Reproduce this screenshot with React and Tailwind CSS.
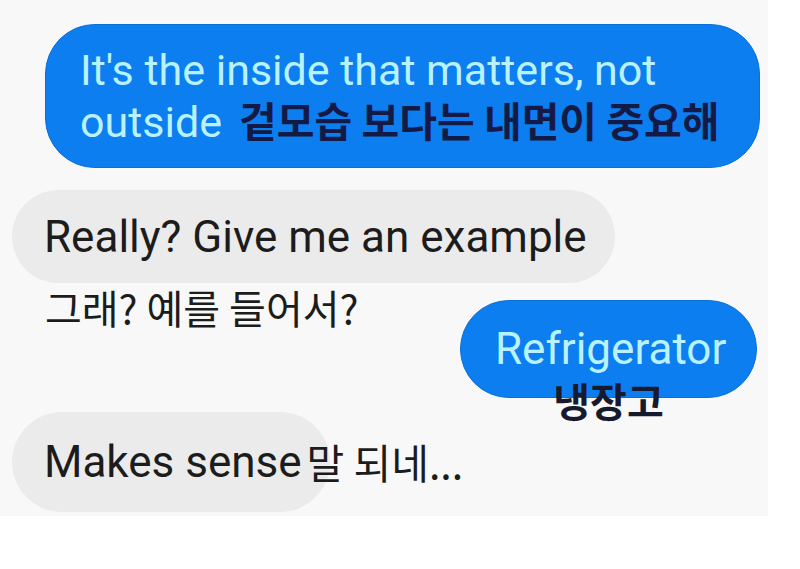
const latin = { fontFamily: "Roboto, 'Noto Sans CJK KR', sans-serif" };
const hangul = { fontFamily: "'Noto Sans CJK KR', sans-serif" };

export default function App() {
  return (
    <div className="w-[800px] h-[569px] bg-white overflow-hidden">
      <div className="w-[768px] h-[516px] bg-[#f8f8f8] flex flex-col" style={latin}>
        {/* outgoing */}
        <div className="ml-[45px] mt-[24px] w-[715px] h-[144px] rounded-[50px] bg-[#0d7ef0] border border-[#0a6fd6] pl-[34px] pt-[21px] text-[43px] leading-[49px] text-[#b9f2ff] whitespace-nowrap">
          <div>It's the inside that matters, not</div>
          <div className="flex items-baseline">
            <span>outside</span>
            <span className="ml-[17px] text-[41px] font-semibold text-[#141a46]" style={hangul}>
              겉모습 보다는 내면이 중요해
            </span>
          </div>
        </div>

        {/* incoming */}
        <div className="ml-[12px] mt-[22px] w-[603px] h-[93px] rounded-full bg-[#ebebeb] flex items-center pl-[32px] text-[44px] text-[#1c1c1c]">
          Really? Give me an example
        </div>

        <div className="flex justify-between">
          <div className="ml-[45px] text-[40px] text-[#1c1c1c] leading-[48px]" style={hangul}>
            그래? 예를 들어서?
          </div>
          <div className="flex flex-col items-center mr-[11px] mt-[17px]">
            <div className="w-[297px] h-[98px] rounded-full bg-[#0d7ef0] border border-[#0a6fd6] flex items-center pl-[34px] text-[44px] leading-[40px] text-[#b9f2ff]">
              Refrigerator
            </div>
            <div className="-mt-[16px] text-[40px] font-semibold text-[#161a2e] leading-[36px]" style={hangul}>
              냉장고
            </div>
          </div>
        </div>

        <div className="ml-[12px] mt-[-6px] w-[318px] h-[100px] rounded-full bg-[#ebebeb] flex items-center pl-[32px] text-[44px] text-[#1c1c1c] whitespace-nowrap">
          <span>Makes sense</span>
          <span className="ml-[5px] text-[41px]" style={hangul}>말 되네...</span>
        </div>
      </div>
    </div>
  );
}
